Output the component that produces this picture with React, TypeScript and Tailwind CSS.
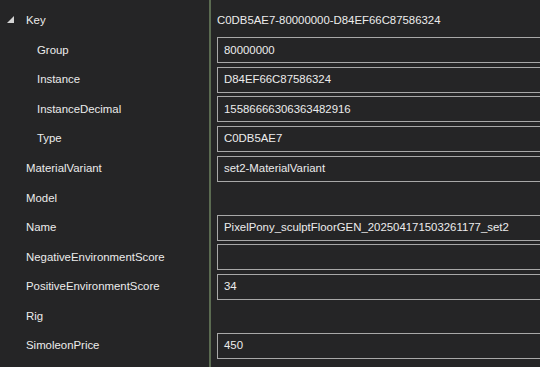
import React from "react";

type Row = { label: string; indent: number; value?: string; box: boolean; expander?: boolean };

const rows: Row[] = [
  { label: "Key", indent: 0, value: "C0DB5AE7-80000000-D84EF66C87586324", box: false, expander: true },
  { label: "Group", indent: 1, value: "80000000", box: true },
  { label: "Instance", indent: 1, value: "D84EF66C87586324", box: true },
  { label: "InstanceDecimal", indent: 1, value: "15586666306363482916", box: true },
  { label: "Type", indent: 1, value: "C0DB5AE7", box: true },
  { label: "MaterialVariant", indent: 0, value: "set2-MaterialVariant", box: true },
  { label: "Model", indent: 0, box: false },
  { label: "Name", indent: 0, value: "PixelPony_sculptFloorGEN_202504171503261177_set2", box: true },
  { label: "NegativeEnvironmentScore", indent: 0, value: "", box: true },
  { label: "PositiveEnvironmentScore", indent: 0, value: "34", box: true },
  { label: "Rig", indent: 0, box: false },
  { label: "SimoleonPrice", indent: 0, value: "450", box: true },
];

export default function App() {
  return (
    <div
      className="w-[540px] h-[367px] overflow-hidden bg-[#252526] flex text-[11.4px] text-[#ececec]"
      style={{ fontFamily: '"Liberation Sans", Arial, sans-serif' }}
    >
      <div className="w-[209px] shrink-0 pt-[6px]">
        {rows.map((r) => (
          <div key={r.label} className="h-[29.55px] flex items-center relative">
            {r.expander && (
              <svg className="absolute left-[7px] top-[10px]" width="7" height="7" viewBox="0 0 7 7">
                <polygon points="7,0 7,7 0,7" fill="#d4d4d4" />
              </svg>
            )}
            <span className={r.indent ? "pl-[37px]" : "pl-[26px]"}>{r.label}</span>
          </div>
        ))}
      </div>
      <div className="w-[2px] shrink-0 bg-[#5b6b51]" />
      <div className="flex-1 min-w-0 pt-[6px] pl-[6px]">
        {rows.map((r) => (
          <div key={r.label} className="h-[29.55px] flex items-center">
            {r.box ? (
              <div className="h-[26px] w-[340px] shrink-0 border border-[#a8a8a8] bg-[#252526] flex items-center pl-[6px] whitespace-nowrap">
                {r.value}
              </div>
            ) : (
              <span className="whitespace-nowrap">{r.value ?? ""}</span>
            )}
          </div>
        ))}
      </div>
    </div>
  );
}
